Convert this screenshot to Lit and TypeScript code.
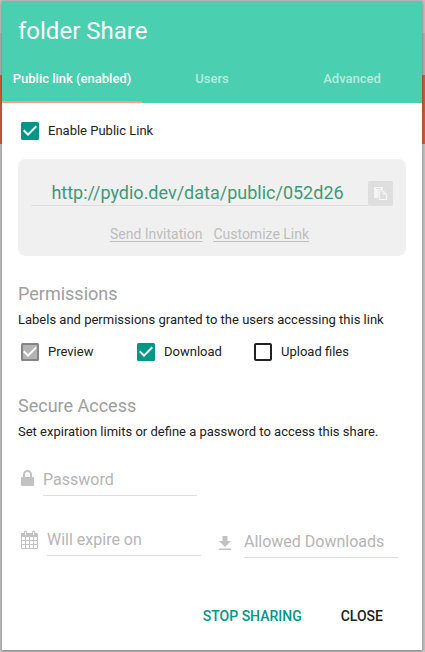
import { LitElement, html, css, svg } from "lit";
import { customElement, property } from "lit/decorators.js";
import { classMap } from "lit/directives/class-map.js";

@customElement("share-checkbox")
class ShareCheckbox extends LitElement {
  @property() label = "";
  @property({ type: Boolean }) checked = false;
  @property({ type: Boolean }) disabled = false;

  static styles = css`
    :host { display: flex; align-items: center; height: 24px; gap: 6px; color: #212121; font-size: 13px; }
    .icon { display: block; width: 24px; height: 24px; flex: none; fill: #212121; }
    .on { fill: #009688; }
    .muted { fill: #858585; }
    .label { line-height: 24px; white-space: nowrap; }
  `;

  render() {
    return html`
      <svg class=${classMap({ icon: true, on: this.checked && !this.disabled, muted: this.disabled })} viewBox="0 0 24 24">
        ${this.checked
          ? svg`<rect x="3" y="3" width="18" height="18" rx="1.5"/>
              ${this.disabled ? svg`<rect x="5" y="5" width="14" height="14" fill="#b4b4b4"/>` : ""}
              <path fill="#fff" d="M10 17l-5-5 1.41-1.41L10 14.17l7.59-7.59L19 8z"/>`
          : svg`<path d="M19 5v14H5V5h14m0-2H5c-1.1 0-2 .9-2 2v14c0 1.1.9 2 2 2h14c1.1 0 2-.9 2-2V5c0-1.1-.9-2-2-2z"/>`}
      </svg>
      <span class="label">${this.label}</span>`;
  }
}

@customElement("app-root")
class AppRoot extends LitElement {
  static styles = css`
    * { box-sizing: border-box; }
    :host {
      display: block; width: 425px; height: 652px; padding: 1px 3px 2px 2px; overflow: hidden; box-sizing: border-box;
      font-family: Roboto, sans-serif; color: #212121;
      background: linear-gradient(#c4c4c4 0 33px, #b4b4b4 33px 75px, #d0603a 75px 144px, #c6c6c6 144px);
    }
    .dialog { display: flex; flex-direction: column; width: 420px; height: 649px; background: #fff; box-shadow: 0 1px 4px rgba(0,0,0,.4); }
    .header { height: 102px; flex: none; background: #4acfb0; color: #fff; display: flex; flex-direction: column; }
    .title { font-size: 24px; line-height: 32px; padding: 14px 16px 0; height: 54px; font-weight: 400; margin: 0; }
    .tabs { display: grid; grid-template-columns: repeat(3, 1fr); height: 48px; font-size: 13px; font-weight: 500; }
    .tab { text-align: center; line-height: 48px; height: 48px; color: rgba(255,255,255,.6); border-bottom: 2px solid transparent; white-space: nowrap; }
    .active { color: #fff; border-bottom-color: #ff9e80; }
    .body { padding: 16px 16px 0; display: flex; flex-direction: column; }
    .link { margin-top: 16px; height: 97px; background: #f0f0f0; border-radius: 8px; padding: 22px 13px 0; }
    .field { display: flex; height: 25px; }
    .url { flex: 1; height: 25px; text-align: center; font-size: 18px; line-height: 23px; color: #3d9a78; border-bottom: 1px solid #dedede; padding-right: 4px; white-space: nowrap; }
    .copy { width: 25px; height: 25px; border-radius: 2px; background: #dedede; display: grid; place-items: center; }
    .copy svg { display: block; width: 15px; height: 15px; }
    .actions { display: flex; justify-content: center; gap: 11px; margin-top: 18px; padding-right: 5px; font-size: 14px; line-height: 20px; color: #bdbdbd; }
    .actions span { text-decoration: underline; text-underline-offset: 2px; text-decoration-thickness: 1px; }
    h2 { margin: 26px 0 0; font-size: 18px; line-height: 24px; font-weight: 400; color: #9e9e9e; }
    .second { margin-top: 30px; }
    .note { font-size: 13px; line-height: 20px; margin-top: 4px; white-space: nowrap; }
    .checks { display: grid; grid-template-columns: 116px 117px 1fr; margin-top: 10px; }
    .input { display: flex; color: #b5b5b5; font-size: 16px; }
    .input svg { display: block; flex: none; fill: #c2c2c2; }
    .input span { width: 154px; height: 30px; line-height: 28px; border-bottom: 1px solid #dedede; white-space: nowrap; }
    .password { margin-top: 24px; padding-left: 3px; }
    .row { display: flex; margin-top: 30px; padding-left: 3px; }
    .password svg { width: 13px; height: 16px; margin: 4px 9px 0 0; }
    .expire svg { width: 17px; height: 19px; margin: 4px 9px 0 0; }
    .downloads { margin: 2px 0 0 18px; }
    .downloads svg { width: 12px; height: 14px; margin: 8px 13px 0 0; }
    .footer { margin-top: auto; height: 52px; display: flex; justify-content: flex-end; gap: 39px; padding-right: 39px; font-size: 14px; font-weight: 500; line-height: 36px; }
    .stop { color: #009688; }
  `;

  render() {
    return html`
      <div class="dialog">
        <div class="header">
          <h1 class="title">folder Share</h1>
          <div class="tabs">
            <div class="tab active">Public link (enabled)</div>
            <div class="tab">Users</div>
            <div class="tab">Advanced</div>
          </div>
        </div>
        <div class="body">
          <share-checkbox checked label="Enable Public Link"></share-checkbox>
          <div class="link">
            <div class="field">
              <div class="url">http://pydio.dev/data/public/052d26</div>
              <div class="copy">
                <svg viewBox="0 0 15 15">
                  <path fill="#f5f5f5" d="M1 1h9v3H5.500v8H1z"/>
                  <path fill="#dedede" d="M3 2h5v1H3z"/>
                  <path fill="#f5f5f5" fill-rule="evenodd" d="M6 4.500h4.500L14 8v6H6zM7 5.500V13h6V8.500H9.500v-3zM10.500 5.900v1.600h1.600z"/>
                </svg>
              </div>
            </div>
            <div class="actions"><span>Send Invitation</span><span>Customize Link</span></div>
          </div>
          <h2>Permissions</h2>
          <div class="note">Labels and permissions granted to the users accessing this link</div>
          <div class="checks">
            <share-checkbox checked disabled label="Preview"></share-checkbox>
            <share-checkbox checked label="Download"></share-checkbox>
            <share-checkbox label="Upload files"></share-checkbox>
          </div>
          <h2 class="second">Secure Access</h2>
          <div class="note">Set expiration limits or define a password to access this share.</div>
          <div class="input password">
            <svg viewBox="0 0 13 16"><path fill-rule="evenodd" d="M2 7V4.500a4.500 4.500 0 0 1 9 0V7h.8q1.200 0 1.200 1.200v6.600q0 1.200-1.200 1.200H1.200Q0 16 0 14.800V8.200Q0 7 1.200 7zM4 7h5V4.500a2.500 2.500 0 0 0-5 0z"/></svg>
            <span>Password</span>
          </div>
          <div class="row">
            <div class="input expire">
              <svg viewBox="0 0 17 19"><path fill-rule="evenodd" d="M1.200 3H3V2a1.500 1.500 0 0 1 3 0v1h5V2a1.500 1.500 0 0 1 3 0v1h1.800Q17 3 17 4.200v13.600q0 1.200-1.200 1.200H1.200Q0 19 0 17.800V4.200Q0 3 1.200 3zM1 7v3h3V7zm4 0v3h3V7zm4 0v3h3V7zm4 0v3h3V7zM1 11v3h3v-3zm4 0v3h3v-3zm4 0v3h3v-3zm4 0v3h3v-3zM1 15v3h3v-3zm4 0v3h3v-3zm4 0v3h3v-3zm4 0v3h3v-3zM4 2v3h1V2zm8 0v3h1V2z"/></svg>
              <span>Will expire on</span>
            </div>
            <div class="input downloads">
              <svg viewBox="0 0 12 14"><path d="M3.500 0h5v5H12l-6 6-6-6h3.500zM0 12.500h12V14H0z"/></svg>
              <span>Allowed Downloads</span>
            </div>
          </div>
        </div>
        <div class="footer"><span class="stop">STOP SHARING</span><span>CLOSE</span></div>
      </div>`;
  }
}
